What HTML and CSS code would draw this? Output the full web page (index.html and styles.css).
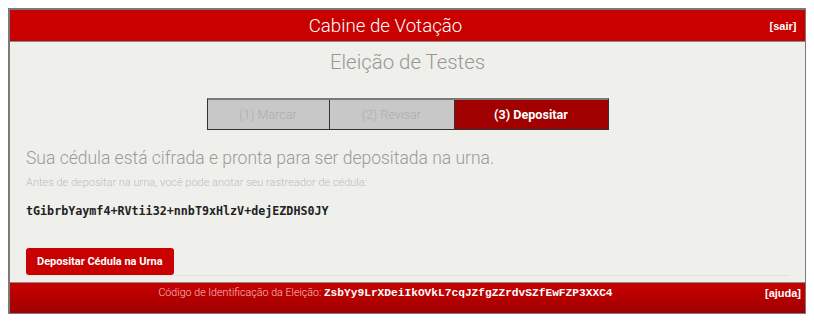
FILE: index.html
```html
<!DOCTYPE html>
<html lang="pt-BR">
<head>
<meta charset="utf-8">
<title>Cabine de Votação</title>
<link rel="stylesheet" href="styles.css">
</head>
<body>
<div class="booth">
  <header class="bar bar-top">
    <div class="bar-title">Cabine de Votação</div>
    <div class="bar-link"><a href="#">[sair]</a></div>
  </header>
  <main class="content">
    <h1 class="election">Eleição de Testes</h1>
    <div class="steps">
      <div class="step">(1) Marcar</div>
      <div class="step">(2) Revisar</div>
      <div class="step step-active">(3) Depositar</div>
    </div>
    <h2 class="lead">Sua cédula está cifrada e pronta para ser depositada na urna.</h2>
    <p class="note">Antes de depositar na urna, você pode anotar seu rastreador de cédula:</p>
    <p class="tracker">tGibrbYaymf4+RVtii32+nnbT9xHlzV+dejEZDHS0JY</p>
    <form class="cast">
      <button type="button" class="cast-btn">Depositar Cédula na Urna</button>
    </form>
  </main>
  <footer class="bar bar-bottom">
    <div class="bar-title footer-text">Código de Identificação da Eleição: <span class="hash">ZsbYy9LrXDeiIkOVkL7cqJZfgZZrdvSZfEwFZP3XXC4</span></div>
    <div class="bar-link"><a href="#">[ajuda]</a></div>
  </footer>
</div>
</body>
</html>
```

FILE: styles.css
```css
html, body {
  margin: 0;
  padding: 0;
  background: #ffffff;
}
body {
  padding: 8px;
  font-family: Roboto, "Liberation Sans", sans-serif;
}
.booth {
  border: 1px solid #7a7a7a;
  border-top-width: 2px;
  border-left-width: 2px;
  background: #eff0eb;
}
.bar {
  display: flex;
  align-items: center;
  color: #ffffff;
}
.bar-top {
  height: 31px;
  background: #c80000;
  border-bottom: 1px solid #8a8a8a;
}
.bar-bottom {
  align-items: flex-start;
  padding-top: 3px;
  box-sizing: border-box;
  height: 31px;
  background: linear-gradient(#c80000, #a00000);
  border-top: 1px solid #8a8a8a;
}
.bar-title {
  flex: 1;
  text-align: center;
  font-weight: 300;
  font-size: 18.7px;
}
.bar-link {
  width: 44px;
  text-align: center;
  font-family: "Liberation Sans", sans-serif;
  font-weight: bold;
  font-size: 11px;
}
.bar-bottom .bar-link {
  padding-top: 1px;
}
.bar-link a {
  color: #ffffff;
  text-decoration: none;
}
.footer-text {
  font-size: 10.7px;
  color: #f7c2c2;
}
.hash {
  font-family: "Liberation Mono", monospace;
  font-weight: bold;
  font-size: 11.2px;
  color: #ffffff;
}
.content {
  padding: 8px 16px 0;
  height: 240px;
  box-sizing: border-box;
  display: flex;
  flex-direction: column;
}
.election {
  margin: 0;
  text-align: center;
  font-weight: 300;
  font-size: 20.4px;
  color: #9a9590;
}
.steps {
  display: grid;
  grid-template-columns: 121px 125px 154px;
  align-self: center;
  margin: 24px 0 0;
  border: 1px solid #333333;
  border-top: 2px solid #7a7a7a;
  height: 32px;
  box-sizing: border-box;
}
.step {
  display: flex;
  align-items: center;
  justify-content: center;
  background: #c8c8c8;
  color: #a9adb2;
  font-size: 12.6px;
  font-weight: 300;
  border-left: 1px solid #333333;
}
.step:first-child {
  border-left: none;
}
.step-active {
  background: #a00000;
  color: #ffffff;
  font-weight: bold;
}
.lead {
  margin: 18px 0 0;
  font-weight: 300;
  font-size: 17.5px;
  color: #9a9a9a;
}
.note {
  margin: 8px 0 0;
  font-weight: 300;
  font-size: 11px;
  color: #bcbcbc;
}
.tracker {
  margin: 15px 0 0;
  font-family: "DejaVu Sans Mono", monospace;
  font-weight: bold;
  font-size: 11.7px;
  color: #222222;
}
.cast {
  margin-top: auto;
  border-bottom: 1px solid #e3e4df;
  margin-bottom: 6px;
}
.cast-btn {
  display: block;
  height: 27px;
  padding: 0 11px;
  border: none;
  border-radius: 3px;
  background: #c80000;
  color: #ffffff;
  font-family: Roboto, "Liberation Sans", sans-serif;
  font-weight: bold;
  font-size: 11px;
}
```
